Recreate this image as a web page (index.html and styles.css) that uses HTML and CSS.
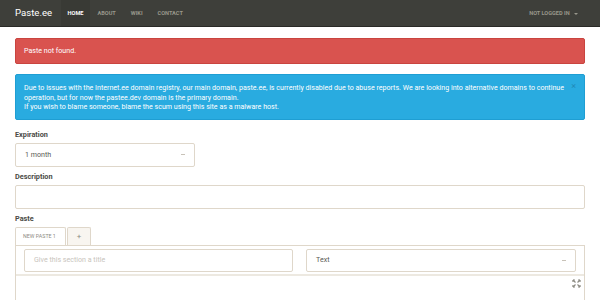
FILE: index.html
```html
<!DOCTYPE html>
<html>
<head>
<meta charset="utf-8">
<link rel="stylesheet" href="styles.css">
</head>
<body>
<nav class="navbar">
  <div class="brand">Paste.ee</div>
  <ul class="nav">
    <li class="active">Home</li>
    <li>About</li>
    <li>Wiki</li>
    <li>Contact</li>
  </ul>
  <div class="user">Not logged in <span class="caret"></span></div>
</nav>
<main class="container">
  <div class="alert danger">Paste not found.</div>
  <div class="alert info">
    <span class="close">×</span>
    Due to issues with the Internet.ee domain registry, our main domain, paste.ee, is currently disabled due to abuse reports. We are looking into alternative domains to continue operation, but for now the pastee.dev domain is the primary domain.<br>
    If you wish to blame someone, blame the scum using this site as a malware host.
  </div>
  <div class="group">
    <label>Expiration</label>
    <div class="select short"><span class="val">1 month</span><span class="arrow"></span></div>
  </div>
  <div class="group">
    <label>Description</label>
    <div class="input"></div>
  </div>
  <div class="group">
    <label>Paste</label>
    <div class="tabs">
      <div class="tab active">New Paste 1</div>
      <div class="tab add">+</div>
    </div>
    <div class="panel">
      <div class="row">
        <div class="input title"><span class="ph">Give this section a title</span></div>
        <div class="select lang"><span class="val">Text</span><span class="arrow"></span></div>
      </div>
      <div class="editor">
        <svg class="expand" width="9" height="9" viewBox="0 0 9 9"><g stroke="#8e8c84" stroke-width="1.2" fill="none"><path d="M1 1l2.5 2.5M8 1L5.5 3.5M1 8l2.5-2.5M8 8L5.5 5.5"/><path d="M1 1h2M1 1v2M8 1h-2M8 1v2M1 8h2M1 8v-2M8 8h-2M8 8v-2"/></g></svg>
      </div>
    </div>
  </div>
</main>
</body>
</html>
```
FILE: styles.css
```css
* { box-sizing: border-box; }
html, body { margin: 0; padding: 0; background: #fff; }
body { font-family: Roboto, "Liberation Sans", sans-serif; color: #3e3f3a; font-size: 7.1px; line-height: 1.43; }
.navbar { height: 27px; background: #3e3f3a; border-bottom: 1px solid #2a2a27; display: flex; align-items: stretch; padding: 0 15px; }
.brand { color: #fff; font-size: 9.6px; line-height: 26px; margin-right: 9px; }
.nav { list-style: none; margin: 0; padding: 0; display: flex; }
.nav li { text-transform: uppercase; font-size: 5.6px; font-weight: 700; color: #98978b; padding: 0 7.5px; line-height: 26px; }
.nav li.active { background: #393a35; color: #fff; padding: 0 6.5px; }
.user { margin-left: auto; text-transform: uppercase; font-size: 5.6px; font-weight: 700; color: #98978b; line-height: 26px; padding-right: 7px; }
.caret { display: inline-block; width: 0; height: 0; border-left: 2.5px solid transparent; border-right: 2.5px solid transparent; border-top: 2.5px solid #98978b; margin-left: 3px; vertical-align: middle; }
.container { padding: 11px 15px 0; }
.alert { border-radius: 2px; color: #fff; padding: 0 8px; margin-bottom: 10px; position: relative; font-size: 7.1px; }
.danger { background: #d9534f; border: 1px solid #c9443f; height: 26px; line-height: 24px; }
.info { background: #29abe0; border: 1px solid #1f9ed3; padding: 8px 16px 7px 8px; line-height: 9.6px; }
.close { position: absolute; right: 8px; top: 7px; color: #1a6f95; font-size: 9px; opacity: .55; }
.group { margin-bottom: 5px; }
label { display: block; font-weight: 700; font-size: 7.3px; line-height: 10px; margin-top: 3px; margin-bottom: 3px; color: #4a4a45; }
.select, .input { border: 1px solid #dfd7ca; border-radius: 2px; height: 24px; display: flex; align-items: center; padding: 0 9px; background: #fff; }
.val { color: #5a5a55; }
.select.short { width: 180px; justify-content: space-between; }
.arrow { width: 4px; height: 1px; background: #c8c2b8; }
.tabs { display: flex; }
.tab { height: 18px; line-height: 17px; font-size: 5.3px; text-transform: uppercase; color: #8e8c84; border: 1px solid #dfd7ca; border-bottom: none; border-radius: 2px 2px 0 0; padding: 0 7px; }
.tab.active { background: #fff; width: 51px; }
.tab.add { background: #f8f5f0; width: 24px; text-align: center; font-size: 8px; margin-left: 1px; }
.panel { border: 1px solid #dfd7ca; border-bottom: none; width: 570px; }
.row { display: flex; justify-content: space-between; padding: 3px 8px 2px 8px; border-bottom: 2px solid #ede9e1; }
.title { width: 269px; height: 23px; }
.ph { color: #c8c4bc; }
.lang { width: 270px; height: 23px; justify-content: space-between; }
.editor { height: 30px; position: relative; }
.expand { position: absolute; right: 3px; top: 3px; }
```
